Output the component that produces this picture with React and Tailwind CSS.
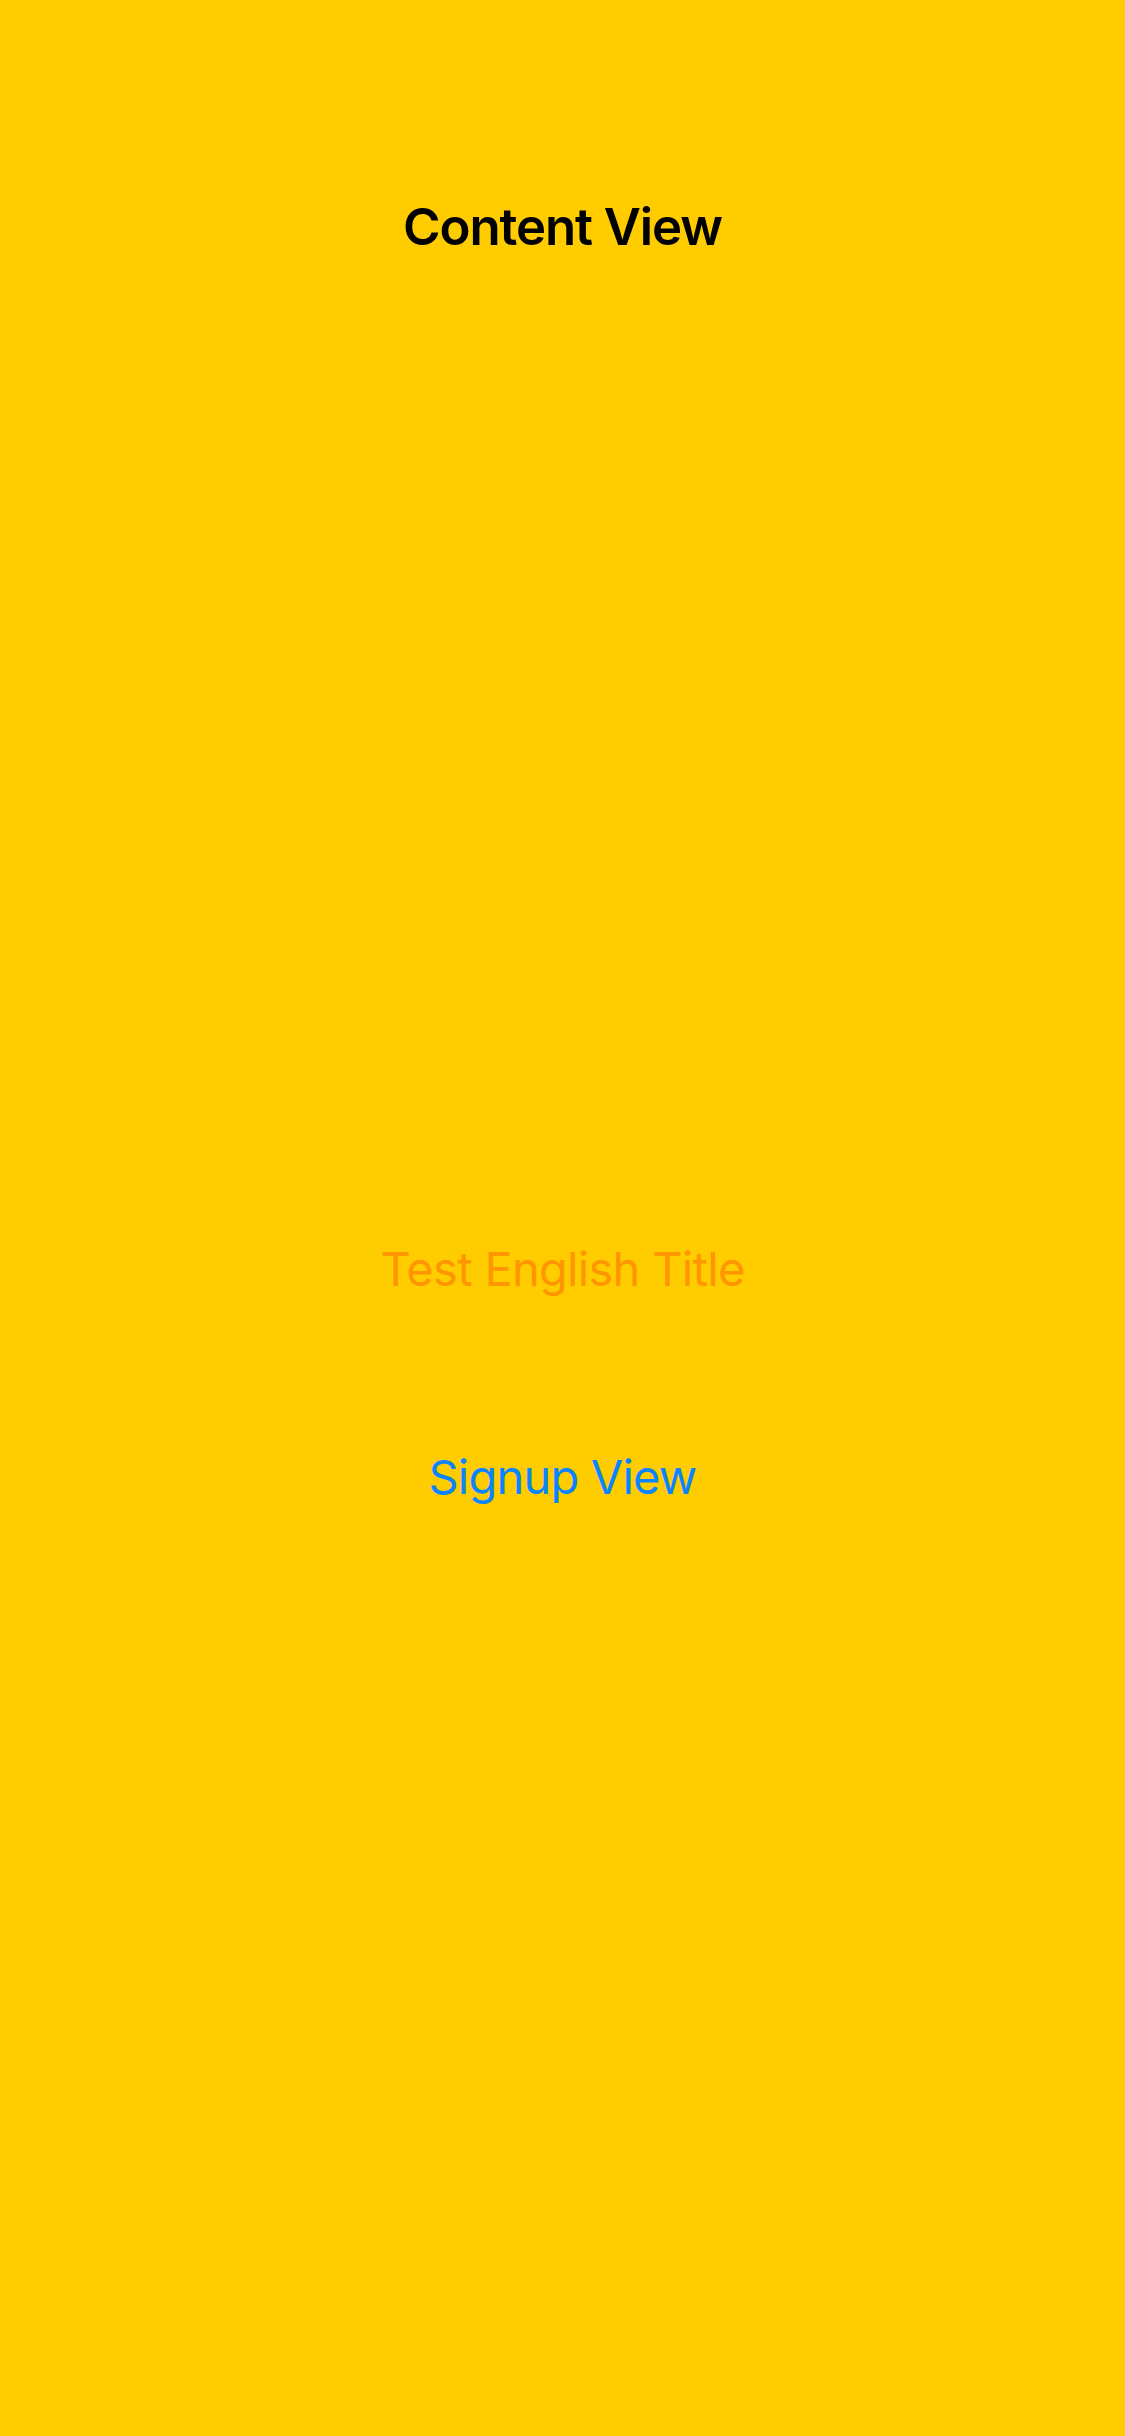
import React from "react";

const App = () => {
  return (
    <div
      className="w-[1125px] h-[2436px] bg-[#ffcc00] flex flex-col items-center"
      style={{ fontFamily: "Inter, 'Noto Sans', sans-serif" }}
    >
      {/* nav title */}
      <div className="pt-[201px] text-[51px] leading-none font-semibold text-black tracking-[-1.1px]">
        Content View
      </div>

      {/* body */}
      <div className="mt-[993px] text-[47px] leading-none text-[#ff9500] tracking-[-0.7px]">
        Test English Title
      </div>
      <button className="mt-[161px] text-[47px] leading-none text-[#0a84ff] tracking-[-0.8px]">
        Signup View
      </button>
    </div>
  );
};

export default App;
